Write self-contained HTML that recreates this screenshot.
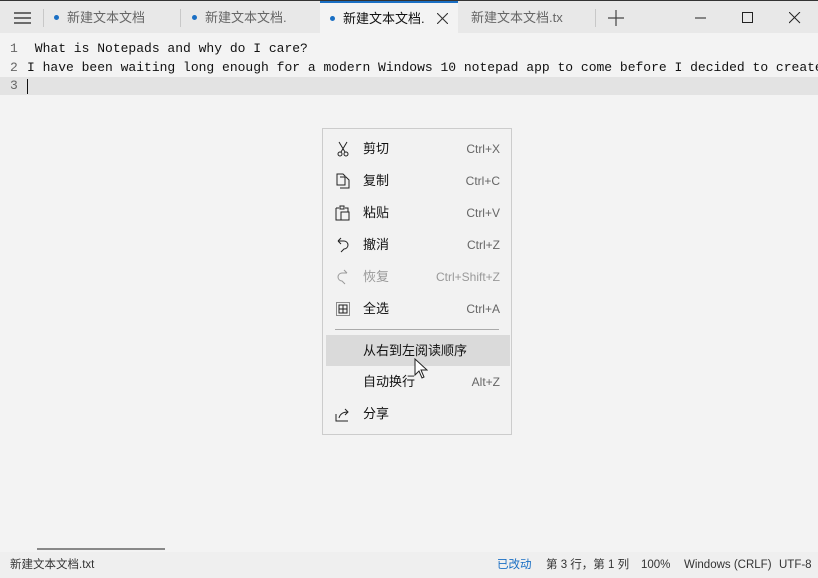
<!DOCTYPE html>
<html><head><meta charset="utf-8"><style>
*{margin:0;padding:0;box-sizing:border-box}
body{width:818px;height:578px;overflow:hidden;background:#f3f3f3;font-family:"Liberation Sans","Noto Sans CJK SC",sans-serif;position:relative}
.tabbar{position:absolute;left:0;top:0;width:818px;height:33px;background:#e8e8e8;border-top:1px solid #333}
.tab{position:absolute;top:0;height:33px;font-size:13px;color:#666;line-height:34px;white-space:nowrap;overflow:hidden}
.dot{display:inline-block;width:5px;height:5px;border-radius:50%;background:#1a6fc4;margin-right:8px;vertical-align:middle;position:relative;top:-1px}
.sep{position:absolute;top:8px;width:1px;height:18px;background:#c8c8c8}
.code{position:absolute;font-family:"Liberation Mono",monospace;font-size:13px;color:#111;white-space:pre}
.ln{position:absolute;left:10px;font-family:"Liberation Mono",monospace;font-size:13px;color:#666}
.menu{position:absolute;left:322px;top:128px;width:190px;height:307px;background:#f2f2f2;border:1px solid #ccc}
.it{position:absolute;left:0;width:188px;height:32px;font-size:13px;color:#111;line-height:32px}
.it .t{position:absolute;left:40px}
.it .k{position:absolute;right:11px;font-size:12px;color:#666}
.it svg{position:absolute;left:12px;top:8px}
.status{position:absolute;left:0;top:552px;width:818px;height:26px;background:#efefef;font-size:11.5px;color:#333;line-height:26px}
.status span{position:absolute}
</style></head><body>
<div class="tabbar">
 <svg style="position:absolute;left:14px;top:11px" width="18" height="12"><path d="M0 1h17M0 6h17M0 11h17" stroke="#222" stroke-width="1.2"/></svg>
 <div class="sep" style="left:43px"></div>
 <div class="tab" style="left:54px;width:120px"><span class="dot"></span>新建文本文档</div>
 <div class="sep" style="left:180px"></div>
 <div class="tab" style="left:192px;width:100px"><span class="dot"></span>新建文本文档.</div>
 <div class="tab" style="left:320px;width:138px;background:#f3f3f3;border-top:2px solid #1a6fc4;color:#111;line-height:31px;padding-left:10px"><span class="dot"></span>新建文本文档.<svg style="position:absolute;left:117px;top:10px" width="11" height="11"><path d="M0 0L11 11M11 0L0 11" stroke="#333" stroke-width="1.1"/></svg></div>
 <div class="tab" style="left:471px;width:97px">新建文本文档.tx</div>
 <div class="sep" style="left:595px"></div>
 <svg style="position:absolute;left:608px;top:9px" width="16" height="16"><path d="M8 0v16M0 8h16" stroke="#444" stroke-width="1.2"/></svg>
 <svg style="position:absolute;left:695px;top:16px" width="11" height="2"><path d="M0 1h11" stroke="#222"/></svg>
 <svg style="position:absolute;left:742px;top:11px" width="12" height="12"><rect x=".5" y=".5" width="10" height="10" fill="none" stroke="#222"/></svg>
 <svg style="position:absolute;left:789px;top:11px" width="12" height="12"><path d="M0 0L11 11M11 0L0 11" stroke="#222"/></svg>
</div>
<div style="position:absolute;left:0;top:77px;width:818px;height:18px;background:#e3e3e3"></div>
<div class="ln" style="top:41px">1</div>
<div class="ln" style="top:60px">2</div>
<div class="ln" style="top:78px">3</div>
<div class="code" style="left:27px;top:41px"> What is Notepads and why do I care?</div>
<div class="code" style="left:27px;top:60px">I have been waiting long enough for a modern Windows 10 notepad app to come before I decided to create</div>
<div style="position:absolute;left:27px;top:79px;width:1px;height:15px;background:#111"></div>
<div style="position:absolute;left:37px;top:548px;width:128px;height:2px;background:#888"></div>

<div class="menu">
 <div class="it" style="top:4px"><svg width="16" height="16"><path d="M4 1l6 10M12 1L6 11" stroke="#222" fill="none"/><circle cx="5" cy="13" r="2" fill="none" stroke="#222"/><circle cx="11" cy="13" r="2" fill="none" stroke="#222"/></svg><span class="t">剪切</span><span class="k">Ctrl+X</span></div>
 <div class="it" style="top:36px"><svg width="16" height="16"><path d="M2 1h6l2 2v9H2z M5 4h6l3 3v8H5" stroke="#222" fill="none"/></svg><span class="t">复制</span><span class="k">Ctrl+C</span></div>
 <div class="it" style="top:68px"><svg width="16" height="16"><path d="M1 3h3M10 3h3v4M1 3v12h5M5 1h4v3H5z M6 7h8v8H6z" stroke="#222" fill="none"/></svg><span class="t">粘贴</span><span class="k">Ctrl+V</span></div>
 <div class="it" style="top:100px"><svg width="16" height="16"><path d="M3 4h6a4 4 0 0 1 0 8L6 15M3 4l3-3M3 4l3 3" stroke="#222" fill="none"/></svg><span class="t">撤消</span><span class="k">Ctrl+Z</span></div>
 <div class="it" style="top:132px;color:#999"><svg width="16" height="16"><path d="M12 4H7a4 4 0 0 0 0 8L10 15M12 4l-3-3" stroke="#999" fill="none"/></svg><span class="t">恢复</span><span class="k" style="color:#999">Ctrl+Shift+Z</span></div>
 <div class="it" style="top:164px"><svg width="16" height="16"><rect x="1.5" y="1.5" width="13" height="13" fill="none" stroke="#222" stroke-dasharray="1 1"/><path d="M4 4h8v8H4zM8 4v8M4 8h8" stroke="#222" fill="none"/></svg><span class="t">全选</span><span class="k">Ctrl+A</span></div>
 <div style="position:absolute;left:12px;top:200px;width:164px;height:1px;background:#aaa"></div>
 <div class="it" style="top:206px;background:#dadada;height:31px;left:3px;width:184px"><span class="t" style="left:37px">从右到左阅读顺序</span></div>
 <div class="it" style="top:237px"><span class="t">自动换行</span><span class="k">Alt+Z</span></div>
 <div class="it" style="top:269px"><svg width="16" height="16"><path d="M1 8v7h12M4 12c1-4 4-6 9-6M10 3l3 3-3 3" stroke="#222" fill="none"/></svg><span class="t">分享</span></div>
</div>
<svg style="position:absolute;left:414px;top:358px" width="14" height="22"><path d="M1 1v16l4-4 3 7 2-1-3-7h6z" fill="#fff" stroke="#222"/></svg>

<div class="status">
 <span style="left:10px">新建文本文档.txt</span>
 <span style="left:497px;color:#1a6fc4">已改动</span>
 <span style="left:546px">第 3 行，第 1 列</span>
 <span style="left:641px">100%</span>
 <span style="left:684px">Windows (CRLF)</span>
 <span style="left:779px">UTF-8</span>
</div>
</body></html>
